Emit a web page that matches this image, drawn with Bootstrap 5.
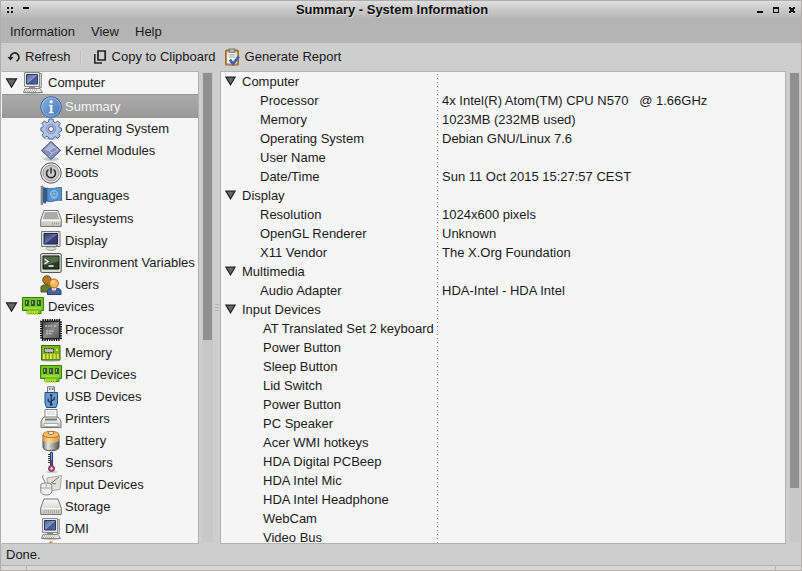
<!DOCTYPE html>
<html lang="en">
<head>
<meta charset="utf-8">
<meta name="viewport" content="width=device-width, initial-scale=1">
<title>Summary - System Information</title>
<link href="https://cdn.jsdelivr.net/npm/bootstrap@5.3.0/dist/css/bootstrap.min.css" rel="stylesheet">
<style>
body{font-family:"Liberation Sans",Arial,sans-serif;font-size:13px;line-height:18px;color:#1a1a1a;background:#cecece}
svg{display:block;flex:none}
.app-window{border:1px solid #b0aeac}
.titlebar{height:18px;background:linear-gradient(#dedede,#b4b4b4)}
.titlebar h1{font-size:13px;line-height:18px;font-weight:700;color:#111;padding-right:2px;text-shadow:1px 1px 0 #d8d8d8}
.win-btn,.menu-btn,.tool-btn,.tree-btn{border:0;padding:0;background:none;color:inherit;line-height:18px}
.menubar{height:24px;background:#b4b4b4;padding:2px 0 0 9px;gap:16px}
.toolbar{height:28px;padding-left:6px}
.tool-btn{gap:4px}
.tool-sep{width:1px;height:14px;background:#bdbdbd;border-right:1px solid #d8d8d8;box-sizing:content-box;margin:0 12px 0 9px}
.work{min-height:0;flex:1 1 0}
.pane{background:#f5f5f5;border:1px solid #b2b2b2}
.side-pane{width:198px;border-left-color:#f5f5f5}
.main-pane{min-width:0;background:repeating-linear-gradient(transparent 0 2px,#888 2px 3px,transparent 3px 4px) 216px 0/1px 100% no-repeat #f5f5f5}
.track{width:11px;margin:1px 0 2px 3px;padding:1px 1px 0;background:#c8c8c8}
.track:last-child{margin-right:1px}
.thumb{background:#909090}
.thumb-side{height:57%}
.thumb-main{height:88.500%}
.gutter{width:7px;gap:2px}
.gutter i{width:4px;height:1px;background:#b4b4b4}
.tree-btn{height:22px;gap:3px;width:100%;padding-left:38px;white-space:nowrap;text-align:left}
.tree-btn.tall{height:24px}
.tree-btn.root{padding-left:3px;gap:4px}
.tree-btn.active{background:linear-gradient(#ababab,#989898);color:#f5f5f5;border-top:1px solid #969696}
.info-table{table-layout:fixed;width:100%;border-collapse:collapse}
.info-table col:first-child{width:217px}
.info-table th,.info-table td{height:19px;padding:0;line-height:19px;font-weight:400;white-space:pre;text-align:left}
.info-table .field{padding-left:39px}
.info-table .device{padding-left:42px}
.info-table td{padding-left:4px}
.info-table .group{gap:6px;padding-left:4px}
.group svg{margin-bottom:2px}
.statusbar{height:21px;padding-left:5px;line-height:21px}
.grip{height:5px;background:#d8d8d8;border-top:1px solid #b0b0b0}
.grip span{width:26px}
.grip span:first-child{border-right:1px solid #b0b0b0}
.grip span:last-child{border-left:1px solid #b0b0b0}
</style>
<script src="https://cdn.jsdelivr.net/npm/bootstrap@5.3.0/dist/js/bootstrap.bundle.min.js"></script>
</head>
<body>
<svg class="position-absolute" width="0" height="0" aria-hidden="true">
<defs>
<linearGradient id="gBlue" x1="0" y1="0" x2="1" y2="1"><stop offset="0" stop-color="#8fb6e4"/><stop offset="1" stop-color="#3f72b4"/></linearGradient>
<linearGradient id="gScreen" x1="0" y1="0" x2="1" y2="1"><stop offset="0" stop-color="#4a6099"/><stop offset=".5" stop-color="#8496bd"/><stop offset=".55" stop-color="#405890"/><stop offset="1" stop-color="#5a72a8"/></linearGradient>
<linearGradient id="gNavy" x1="0" y1="0" x2="1" y2="1"><stop offset="0" stop-color="#2c3568"/><stop offset=".5" stop-color="#68709c"/><stop offset=".55" stop-color="#3a4276"/><stop offset="1" stop-color="#2c3568"/></linearGradient>
<linearGradient id="gGrey" x1="0" y1="0" x2="0" y2="1"><stop offset="0" stop-color="#fafafa"/><stop offset="1" stop-color="#c4c4c0"/></linearGradient>
<linearGradient id="gDark" x1="0" y1="0" x2="1" y2="1"><stop offset="0" stop-color="#444"/><stop offset=".5" stop-color="#888"/><stop offset="1" stop-color="#555"/></linearGradient>
<linearGradient id="gCan" x1="0" y1="0" x2="1" y2="0"><stop offset="0" stop-color="#777"/><stop offset=".3" stop-color="#e4e4e4"/><stop offset="1" stop-color="#555"/></linearGradient>
<linearGradient id="gOr" x1="0" y1="0" x2="1" y2="0"><stop offset="0" stop-color="#d99a3a"/><stop offset=".35" stop-color="#ffdc9a"/><stop offset="1" stop-color="#d8943a"/></linearGradient>
</defs>
<symbol id="tri" viewBox="0 0 12 10"><path d="M1 .8h10L6 9.2z" fill="#666" stroke="#222" stroke-width="1.2"/></symbol>
<symbol id="pc" viewBox="0 0 22 22"><ellipse cx="11" cy="20.500" rx="10" ry="1.500" fill="#bbb"/><path d="M17 1.500h2.500v14H17z" fill="#ccc" stroke="#999"/><path d="M2.500.5h15v14h-15z" fill="#e8e8e4" stroke="#888"/><path d="M4.500 2.500h11v9.500h-11z" fill="url(#gScreen)" stroke="#27396e"/><path d="M7 15h6v1.500H7z" fill="#888"/><path d="M3 16.500h15l2.500 4h-19z" fill="#e4e4e0" stroke="#888"/><path d="M4 18h11M3 19.500h12" stroke="#aaa" stroke-dasharray="1 1"/></symbol>
<symbol id="info" viewBox="0 0 22 22"><circle cx="11" cy="11" r="10.300" fill="url(#gBlue)" stroke="#3465a4"/><circle cx="11" cy="11" r="9.300" fill="none" stroke="#a9c6ea" stroke-width=".7"/><circle cx="11.200" cy="5.700" r="1.500" fill="#fff"/><path d="M9 9h3.300v7.300h1.500v1H8.700v-1h1.600v-6.200H9z" fill="#fff"/></symbol>
<symbol id="gear" viewBox="0 0 22 22"><ellipse cx="11" cy="20.500" rx="8" ry="1.300" fill="#ccc"/><path d="M9 1h4l.6 3 1.600.7L17.800 3l2.500 2.600-1.600 2.500.7 1.600 2.100.4v3l-2.100.7-.7 1.600 1.500 2.500-2.500 2.300-2.500-1.500-1.600.7L13 21H9l-.6-2-1.600-.7-2.500 1.500-2.400-2.300 1.500-2.500-.7-1.600-1.800-.5v-3l1.800-.5.7-1.600L1.700 5.600 4.200 3l2.600 1.700L8.400 4z" fill="#b4c2e2" stroke="#4d6ca6"/><circle cx="11" cy="11" r="4.800" fill="#a6b0d0" stroke="#8795bd"/><circle cx="11" cy="11" r="2.500" fill="#f5f5f5" stroke="#58679a"/></symbol>
<symbol id="kernel" viewBox="0 0 22 22"><ellipse cx="11" cy="19" rx="8" ry="2" fill="#c8c8c8"/><path d="M11 1.500l9.500 9-9.500 9-9.500-9z" fill="#8590bd" stroke="#3d4c7d"/><path d="M11 3l4 4-6 4-5-1z" fill="#adb6d6"/><path d="M14 7l-5 4 3 2-3 4M14 7l4 3-6 3" fill="none" stroke="#ccd3ea" stroke-width=".8"/></symbol>
<symbol id="power" viewBox="0 0 22 22"><circle cx="11" cy="11" r="10.200" fill="#eee" stroke="#555"/><circle cx="11" cy="11" r="8" fill="#c9c9c9" stroke="#888" stroke-width=".8"/><path d="M8.500 7.500a4.500 4.500 0 1 0 5 0M11 5.500v6" fill="none" stroke="#222" stroke-width="1.400"/></symbol>
<symbol id="flag" viewBox="0 0 22 22"><path d="M1 1h2v18l-2 1z" fill="#999" stroke="#555" stroke-width=".5"/><path d="M3 2l4 1v13l-2 3-2-2z" fill="#345c8b"/><path d="M7 3c5 2 9-1 14.500-.5v13C16 14 12 18 7 16z" fill="#5791cb" stroke="#285b97" stroke-width=".8"/><circle cx="14" cy="9" r="3.400" fill="none" stroke="#a9cbed"/><path d="M10.500 9h7M14 5.600v7M11 12c2 2 4 2 6 0" fill="none" stroke="#a9cbed" stroke-width=".6"/></symbol>
<symbol id="drive" viewBox="0 0 22 22"><path d="M4 2.500h14l3.300 9v7H.7v-7z" fill="url(#gGrey)" stroke="#777"/><path d="M5 4h12l2 7H3z" fill="#aaa"/><path d="M1.500 12.500h19" stroke="#fff"/><path d="M12 15.500h7" stroke="#999" stroke-width="2" stroke-dasharray="1 1"/></symbol>
<symbol id="disk" viewBox="0 0 22 22"><path d="M4 3h14l3.300 9v6.500H.7V12z" fill="url(#gGrey)" stroke="#777"/><path d="M1.500 12.500h19" stroke="#fff"/><path d="M4 15.500h15" stroke="#aaa" stroke-width="3" stroke-dasharray="1 1"/></symbol>
<symbol id="display" viewBox="0 0 22 22"><ellipse cx="11" cy="18.500" rx="5" ry="1.800" fill="#ddd" stroke="#999"/><path d="M1.500 1.500h18.500v15H1.500z" fill="#deded9" stroke="#777"/><path d="M4 3.500h13.500v10.500H4z" fill="url(#gNavy)" stroke="#20264e"/><path d="M16 15.500h2" stroke="#70b030"/></symbol>
<symbol id="term" viewBox="0 0 22 22"><rect x=".7" y="1.500" width="20.600" height="19" rx="1.500" fill="#dcdcd6" stroke="#555"/><path d="M3 4h16v13H3z" fill="#2b3d24" stroke="#111"/><path d="M3.500 4.500h15v5l-15 4z" fill="#53694a"/><path d="M4.500 7l3.500 2.500L4.500 12M8.500 14h5" fill="none" stroke="#fff" stroke-width="1.300"/></symbol>
<symbol id="users" viewBox="0 0 22 22"><path d="M1 18v-5c0-3 11-3 11 0v5z" fill="#687b25" stroke="#45541a"/><circle cx="7" cy="6" r="4.200" fill="#b87724" stroke="#70420c"/><path d="M7.500 20.500V17c0-4 13.500-4 13.500 0v3.500z" fill="#4264a8" stroke="#23407c"/><path d="M11.500 14l2.500 5 2.500-5z" fill="#fff"/><path d="M14 14l1 5h-2z" fill="#cc2020"/><circle cx="14" cy="9.500" r="4.500" fill="#f8b45a" stroke="#bd651a"/><circle cx="13" cy="8" r="1.800" fill="#ffd497"/></symbol>
<symbol id="card" viewBox="0 0 22 22"><path d="M.5 1.500h21v13H19v3H5v-3H.5z" fill="#73c51b" stroke="#378000"/><path d="M3 4h4v6H3zM9 4h4v6H9zM15 4h4v6h-4z" fill="#36582a"/><path d="M4.500 5v3M10.500 5v3M16.500 5v3" stroke="#9bb38a"/><path d="M2 12h17" stroke="#c2ef67"/><path d="M5 17h11" stroke="#c6e040" stroke-width="4" stroke-dasharray="1.500 .8"/></symbol>
<symbol id="chip" viewBox="0 0 22 22"><rect x="1.500" y="1.500" width="19" height="19" rx="1" fill="#555" stroke="#111" stroke-width="3" stroke-dasharray="1.300 1"/><rect x="2.500" y="2.500" width="17" height="17" fill="url(#gDark)" stroke="#222"/><path d="M5 7h8M14 7h3M6 12h8M6 14.500h6" stroke="#bbb" stroke-width="1.400" stroke-dasharray="2 .7"/></symbol>
<symbol id="ram" viewBox="0 0 22 22"><ellipse cx="11" cy="18.500" rx="10" ry="1.500" fill="#ccc"/><path d="M1.500 3.500h18.500v14.500H1.500z" fill="#7fb51c" stroke="#347000"/><path d="M3 14.500h16" stroke="#ead94b" stroke-width="5" stroke-dasharray="2 1.500"/><path d="M4.500 6.500h9v4h-9z" fill="#bbb" stroke="#333" stroke-dasharray="1 .6"/><circle cx="17" cy="8" r="1" fill="#e9f39d"/></symbol>
<symbol id="usb" viewBox="0 0 22 22"><path d="M7.500.8h7V7h-7z" fill="#e7e7e7" stroke="#777"/><path d="M9 3h1.500M12 3h1.500" stroke="#555" stroke-width="1.500"/><path d="M5 6.500h12.500V17l-1.500 4.500H6.500L5 17z" fill="#6a9ad0" stroke="#224a7b"/><path d="M11.200 9v10M11.200 17l-3-2v-2.500M11.200 15l3-1.500V11" fill="none" stroke="#142c4c" stroke-width="1.200"/><path d="M9.700 10l1.500-2.500L12.700 10z" fill="#142c4c"/><circle cx="11.200" cy="18.500" r="1.300" fill="#142c4c"/></symbol>
<symbol id="printer" viewBox="0 0 22 22"><path d="M5 1.500h12V11H5z" fill="#fff" stroke="#888"/><path d="M7 4h8M7 6h8" stroke="#ccc"/><path d="M4 9h14l3 4v6.500H1V13z" fill="url(#gGrey)" stroke="#777"/><path d="M5 10.500h12v2H5z" fill="#777"/><path d="M4 15.500h14v3H4z" fill="#f8f8f8" stroke="#aaa"/></symbol>
<symbol id="battery" viewBox="0 0 22 22"><path d="M3 5v12c0 5 16 5 16 0V5z" fill="url(#gCan)" stroke="#555"/><path d="M3 5v5c0 4 16 4 16 0V5z" fill="url(#gOr)"/><ellipse cx="11" cy="4.500" rx="8" ry="3.200" fill="#f6be68" stroke="#a76510" stroke-width=".8"/><ellipse cx="11" cy="3" rx="3" ry="1.500" fill="#eee" stroke="#a67b38"/></symbol>
<symbol id="thermo" viewBox="0 0 22 22"><ellipse cx="12" cy="20" rx="6" ry="1.200" fill="#ccc"/><path d="M10.500.5h2v14h-2z" fill="#7fa0d8" stroke="#1c3d7a"/><path d="M8 2.500h2M8 4.500h2M8 6.500h2M8 8.500h2M8 10.500h2" stroke="#333"/><path d="M11.500 8v8" stroke="#d82030"/><circle cx="11.500" cy="16.500" r="3" fill="#ec3547" stroke="#2d4e90"/><path d="M10 16.500h3M11.500 15v3" stroke="#fff" stroke-width=".8"/></symbol>
<symbol id="input" viewBox="0 0 22 22"><path d="M7 4l14.500-2.500L20 15.500 8 17z" fill="#e0e0dc" stroke="#aaa"/><path d="M10 10l9-7M12 9l4 1" stroke="#777"/><path d="M5 9C4 4 1 4 3.500 1" fill="none" stroke="#777"/><path d="M.8 10.500c3-2 8-2 11 0V18c-1 4-10 4-11 0z" fill="#efefef" stroke="#888"/><path d="M1 14h10.500M6.200 9.500V14" stroke="#aaa"/></symbol>
<symbol id="orange" viewBox="0 0 22 22"><path d="M11 1.500L20.500 11 11 20.500 1.500 11z" fill="#f8a34c" stroke="#c95708"/></symbol>
</svg>

<div class="app-window vh-100 d-flex flex-column overflow-hidden">
<header class="titlebar d-flex flex-shrink-0 align-items-center justify-content-between px-1">
<div class="d-flex gap-1">
<button class="win-btn" aria-label="Window menu"><svg width="12" height="12"><path d="M2 3h2v2H2zM6 3h2v2H6zM2 7h2v2H2zM6 7h2v2H6z" fill="#111"/></svg></button>
<button class="win-btn" aria-label="Shade"><svg width="12" height="12"><path d="M2 3h6v2H2z" fill="#111"/></svg></button>
</div>
<h1 class="m-0">Summary - System Information</h1>
<div class="d-flex gap-1">
<button class="win-btn" aria-label="Minimize"><svg width="12" height="12"><path d="M4 7h6v2H4z" fill="#111"/></svg></button>
<button class="win-btn" aria-label="Maximize"><svg width="12" height="12"><path d="M4 3h6v6H4zM5 5v3h4V5z" fill="#111" fill-rule="evenodd"/></svg></button>
<button class="win-btn" aria-label="Close"><svg width="12" height="12"><path d="M4 3h2v1h2V3h2v2H9v2h1v2H8V8H6v1H4V7h1V5H4z" fill="#111"/></svg></button>
</div>
</header>
<nav class="menubar d-flex flex-shrink-0 align-items-center" aria-label="Menu">
<button class="menu-btn">Information</button><button class="menu-btn">View</button><button class="menu-btn">Help</button>
</nav>
<div class="toolbar d-flex flex-shrink-0 align-items-center" role="toolbar" aria-label="Actions">
<button class="tool-btn d-flex align-items-center"><svg width="14" height="14" viewBox="0 0 14 14"><path d="M3.500 8V6.500a4.300 4.300 0 1 1 6 4.700" fill="none" stroke="#222" stroke-width="1.700"/><path d="M.5 7h6l-3 3.500z" fill="#222"/></svg>Refresh</button>
<span class="tool-sep"></span>
<button class="tool-btn d-flex align-items-center me-2"><svg width="14" height="14" viewBox="0 0 14 14"><path d="M4 1h7.200v9H4z" fill="none" stroke="#222" stroke-width="1.700"/><path d="M.8 4v9H8" fill="none" stroke="#222" stroke-width="1.500"/></svg>Copy to Clipboard</button>
<button class="tool-btn d-flex align-items-center"><svg width="17" height="18" viewBox="0 0 16 17"><rect x="1.500" y="2" width="12" height="14" rx="1" fill="#c89555" stroke="#936526"/><path d="M3 4h9v10.500H3z" fill="#f3f3f3"/><path d="M5 1h5v3H5z" fill="#bbb" stroke="#777"/><path d="M4.500 6.500h6M4.500 8.500h6" stroke="#aaa"/><path d="M5.500 11l3 4L14 8" fill="none" stroke="#3465a4" stroke-width="2.500"/></svg>Generate Report</button>
</div>
<main class="work d-flex">
<nav class="pane side-pane overflow-hidden flex-shrink-0" aria-label="Sections">
<ul class="list-unstyled m-0" id="tree"></ul>
</nav>
<div class="track flex-shrink-0"><div class="thumb thumb-side"></div></div>
<div class="gutter d-flex flex-shrink-0 flex-column align-items-center justify-content-center"><i></i><i></i><i></i></div>
<section class="pane main-pane flex-grow-1 overflow-hidden" aria-label="Summary">
<table class="info-table"><colgroup><col><col></colgroup><tbody id="rows"></tbody></table>
</section>
<div class="track flex-shrink-0"><div class="thumb thumb-main"></div></div>
</main>
<footer class="statusbar flex-shrink-0">Done.</footer>
<div class="grip d-flex flex-shrink-0 justify-content-between"><span></span><span></span></div>
</div>
<script>
const icon = (id, w = 22, h = 22) => `<svg width="${w}" height="${h}" aria-hidden="true"><use href="#${id}"/></svg>`;
const sections = [
  ['Computer', 'pc', [['Summary','info','tall active'],['Operating System','gear'],['Kernel Modules','kernel'],['Boots','power'],['Languages','flag','tall'],['Filesystems','drive'],['Display','display'],['Environment Variables','term'],['Users','users']]],
  ['Devices', 'card', [['Processor','chip','tall'],['Memory','ram'],['PCI Devices','card'],['USB Devices','usb'],['Printers','printer'],['Battery','battery'],['Sensors','thermo'],['Input Devices','input'],['Storage','disk'],['DMI','pc'],['','orange']]]
];
document.getElementById('tree').innerHTML = sections.map(([name, ic, kids]) =>
  `<li><button class="tree-btn root d-flex align-items-center">${icon('tri', 13, 10)}${icon(ic)}${name}</button><ul class="list-unstyled m-0">` +
  kids.map(([n, i, c = '']) => `<li><button class="tree-btn d-flex align-items-center ${c}">${icon(i)}${n}</button></li>`).join('') + '</ul></li>').join('');
const groups = [
  ['Computer', 'field', [['Processor','4x Intel(R) Atom(TM) CPU N570   @ 1.66GHz'],['Memory','1023MB (232MB used)'],['Operating System','Debian GNU/Linux 7.6'],['User Name',''],['Date/Time','Sun 11 Oct 2015 15:27:57 CEST']]],
  ['Display', 'field', [['Resolution','1024x600 pixels'],['OpenGL Renderer','Unknown'],['X11 Vendor','The X.Org Foundation']]],
  ['Multimedia', 'field', [['Audio Adapter','HDA-Intel - HDA Intel']]],
  ['Input Devices', 'device', ['AT Translated Set 2 keyboard','Power Button','Sleep Button','Lid Switch','Power Button','PC Speaker','Acer WMI hotkeys','HDA Digital PCBeep','HDA Intel Mic','HDA Intel Headphone','WebCam','Video Bus'].map(n => [n, ''])]
];
document.getElementById('rows').innerHTML = groups.map(([g, cls, items]) =>
  `<tr><th colspan="2"><div class="group d-flex align-items-center">${icon('tri', 11, 10)}${g}</div></th></tr>` +
  items.map(([n, v]) => `<tr><th class="${cls}" scope="row">${n}</th><td>${v}</td></tr>`).join('')).join('');
</script>
</body>
</html>
